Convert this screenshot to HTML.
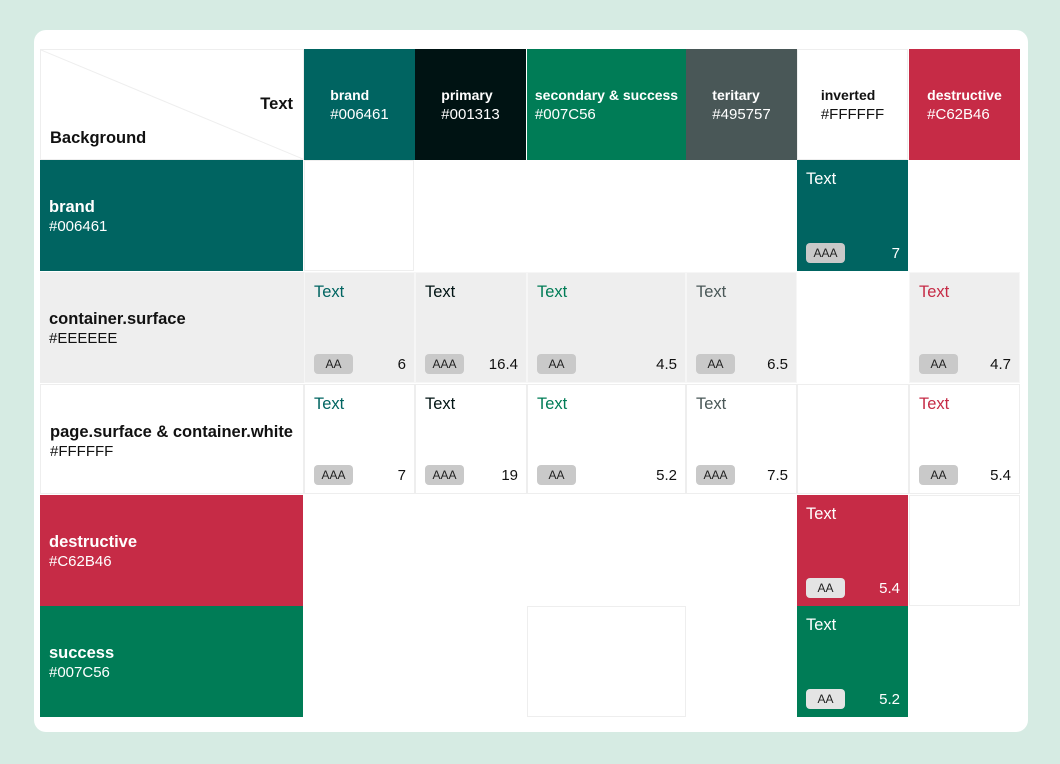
<!DOCTYPE html>
<html><head><meta charset="utf-8"><style>
*{margin:0;padding:0;box-sizing:border-box}
body{width:1060px;height:764px;background:#d6ebe3;font-family:"Liberation Sans",sans-serif;position:relative;overflow:hidden}
.card{position:absolute;left:34px;top:30px;width:994px;height:702px;background:#fff;border-radius:12px}
.c{position:absolute;border:1px solid #eee}
.h{display:flex;align-items:center;justify-content:center;color:#fff;font-size:15px;line-height:19px}
.h b{display:block;font-size:14px}
.r{color:#fff;padding:37px 0 0 9px;font-size:15px;line-height:20px;border:none}
.r b{display:block;font-size:16.5px}
.t{font-size:16.5px;position:absolute;left:9px;top:10px}
.bd{position:absolute;left:9px;bottom:8px;background:#c9c9c9;border-radius:4px;font-size:12px;color:#222;width:39px;height:20px;line-height:20px;text-align:center}
.n{position:absolute;right:8px;bottom:9px;font-size:15px;color:#111}
</style></head><body>
<div class="card"></div>
<div class="c" style="left:40px;top:49px;width:264px;height:111px;background:#fff">
<svg width="262" height="109" style="position:absolute;left:0;top:0"><line x1="0" y1="0" x2="262" y2="109" stroke="#eee"/></svg>
<div style="position:absolute;right:10px;top:45px;font-weight:bold;font-size:16.5px;color:#111">Text</div>
<div style="position:absolute;left:9px;top:79px;font-weight:bold;font-size:16.5px;color:#111">Background</div>
</div>
<div class="c h" style="left:304px;top:49px;width:111px;height:111px;background:#006461;border:none"><div><b>brand</b>#006461</div></div>
<div class="c h" style="left:415px;top:49px;width:111px;height:111px;background:#001313;border:none"><div><b>primary</b>#001313</div></div>
<div class="c h" style="left:527px;top:49px;width:159px;height:111px;background:#007C56;border:none"><div><b>secondary &amp; success</b>#007C56</div></div>
<div class="c h" style="left:686px;top:49px;width:111px;height:111px;background:#495757;border:none"><div><b>teritary</b>#495757</div></div>
<div class="c h" style="left:797px;top:49px;width:111px;height:111px;background:#fff;color:#111"><div><b>inverted</b>#FFFFFF</div></div>
<div class="c h" style="left:909px;top:49px;width:111px;height:111px;background:#C62B46;border:none"><div><b>destructive</b>#C62B46</div></div>

<div class="c r" style="left:40px;top:160px;width:263px;height:111px;background:#006461"><b>brand</b>#006461</div>
<div class="c r" style="left:40px;top:272px;width:264px;height:111px;background:#eee;color:#111"><b>container.surface</b>#EEEEEE</div>
<div class="c r" style="left:40px;top:384px;width:264px;height:110px;background:#fff;color:#111;border:1px solid #eee"><b>page.surface &amp; container.white</b>#FFFFFF</div>
<div class="c r" style="left:40px;top:495px;width:263px;height:111px;background:#C62B46"><b>destructive</b>#C62B46</div>
<div class="c r" style="left:40px;top:606px;width:263px;height:111px;background:#007C56"><b>success</b>#007C56</div>

<div class="c" style="left:304px;top:160px;width:110px;height:111px"></div>
<div class="c" style="left:797px;top:160px;width:111px;height:111px;background:#006461;border:none"><span class="t" style="color:#fff">Text</span><span class="bd">AAA</span><span class="n" style="color:#fff">7</span></div>

<div class="c" style="left:304px;top:272px;width:111px;height:111px;background:#eee;border-color:#f6f6f6"><span class="t" style="color:#006461">Text</span><span class="bd">AA</span><span class="n">6</span></div>
<div class="c" style="left:415px;top:272px;width:112px;height:111px;background:#eee;border-color:#f6f6f6"><span class="t" style="color:#001313">Text</span><span class="bd">AAA</span><span class="n">16.4</span></div>
<div class="c" style="left:527px;top:272px;width:159px;height:111px;background:#eee;border-color:#f6f6f6"><span class="t" style="color:#007C56">Text</span><span class="bd">AA</span><span class="n">4.5</span></div>
<div class="c" style="left:686px;top:272px;width:111px;height:111px;background:#eee;border-color:#f6f6f6"><span class="t" style="color:#495757">Text</span><span class="bd">AA</span><span class="n">6.5</span></div>
<div class="c" style="left:909px;top:272px;width:111px;height:111px;background:#eee;border-color:#f6f6f6"><span class="t" style="color:#C62B46">Text</span><span class="bd">AA</span><span class="n">4.7</span></div>

<div class="c" style="left:304px;top:384px;width:111px;height:110px"><span class="t" style="color:#006461">Text</span><span class="bd">AAA</span><span class="n">7</span></div>
<div class="c" style="left:415px;top:384px;width:112px;height:110px"><span class="t" style="color:#001313">Text</span><span class="bd">AAA</span><span class="n">19</span></div>
<div class="c" style="left:527px;top:384px;width:159px;height:110px"><span class="t" style="color:#007C56">Text</span><span class="bd">AA</span><span class="n">5.2</span></div>
<div class="c" style="left:686px;top:384px;width:111px;height:110px"><span class="t" style="color:#495757">Text</span><span class="bd">AAA</span><span class="n">7.5</span></div>
<div class="c" style="left:797px;top:384px;width:112px;height:110px"></div>
<div class="c" style="left:909px;top:384px;width:111px;height:110px"><span class="t" style="color:#C62B46">Text</span><span class="bd">AA</span><span class="n">5.4</span></div>

<div class="c" style="left:797px;top:495px;width:111px;height:111px;background:#C62B46;border:none"><span class="t" style="color:#fff">Text</span><span class="bd" style="background:#e4e4e4">AA</span><span class="n" style="color:#fff">5.4</span></div>
<div class="c" style="left:909px;top:495px;width:111px;height:111px"></div>

<div class="c" style="left:527px;top:606px;width:159px;height:111px"></div>
<div class="c" style="left:797px;top:606px;width:111px;height:111px;background:#007C56;border:none"><span class="t" style="color:#fff">Text</span><span class="bd" style="background:#e4e4e4">AA</span><span class="n" style="color:#fff">5.2</span></div>
</body></html>
